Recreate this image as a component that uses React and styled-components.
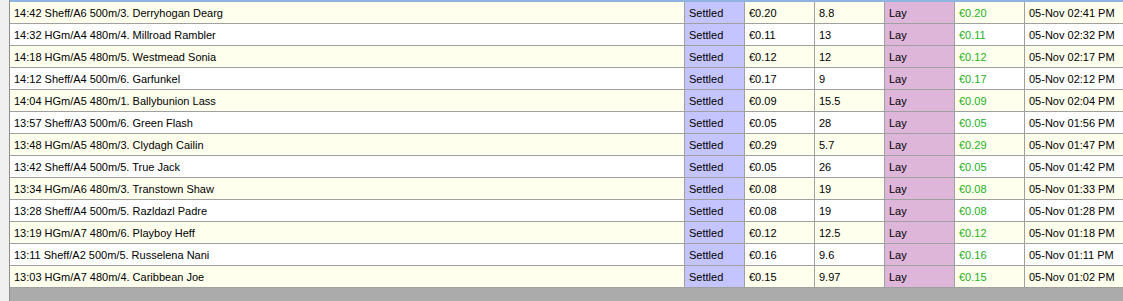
import React from 'react'
import styled, { createGlobalStyle } from 'styled-components'

const rows = [
    ['14:42 Sheff/A6 500m/3. Derryhogan Dearg', '€0.20', '8.8', '€0.20', '05-Nov 02:41 PM'],
    ['14:32 HGm/A4 480m/4. Millroad Rambler', '€0.11', '13', '€0.11', '05-Nov 02:32 PM'],
    ['14:18 HGm/A5 480m/5. Westmead Sonia', '€0.12', '12', '€0.12', '05-Nov 02:17 PM'],
    ['14:12 Sheff/A4 500m/6. Garfunkel', '€0.17', '9', '€0.17', '05-Nov 02:12 PM'],
    ['14:04 HGm/A5 480m/1. Ballybunion Lass', '€0.09', '15.5', '€0.09', '05-Nov 02:04 PM'],
    ['13:57 Sheff/A3 500m/6. Green Flash', '€0.05', '28', '€0.05', '05-Nov 01:56 PM'],
    ['13:48 HGm/A5 480m/3. Clydagh Cailin', '€0.29', '5.7', '€0.29', '05-Nov 01:47 PM'],
    ['13:42 Sheff/A4 500m/5. True Jack', '€0.05', '26', '€0.05', '05-Nov 01:42 PM'],
    ['13:34 HGm/A6 480m/3. Transtown Shaw', '€0.08', '19', '€0.08', '05-Nov 01:33 PM'],
    ['13:28 Sheff/A4 500m/5. Razldazl Padre', '€0.08', '19', '€0.08', '05-Nov 01:28 PM'],
    ['13:19 HGm/A7 480m/6. Playboy Heff', '€0.12', '12.5', '€0.12', '05-Nov 01:18 PM'],
    ['13:11 Sheff/A2 500m/5. Russelena Nani', '€0.16', '9.6', '€0.16', '05-Nov 01:11 PM'],
    ['13:03 HGm/A7 480m/4. Caribbean Joe', '€0.15', '9.97', '€0.15', '05-Nov 01:02 PM'],
]

const App = () => {
    return (
        <>
            <GlobalStyle />
            <Frame>
                <SideStrip />
                <GridArea>
                    <TopLine />
                    {rows.map((r, i) => (
                        <Row key={i} $alt={i % 2 === 1}>
                            <Cell>{r[0]}</Cell>
                            <Cell $bg="#c4c4ff">Settled</Cell>
                            <Cell>{r[1]}</Cell>
                            <Cell>{r[2]}</Cell>
                            <Cell $bg="#ddb6d9">Lay</Cell>
                            <Cell $color="#1cb01c">{r[3]}</Cell>
                            <Cell $last>{r[4]}</Cell>
                        </Row>
                    ))}
                    <Workspace />
                </GridArea>
            </Frame>
        </>
    )
}

export default App

const GlobalStyle = createGlobalStyle`
    html, body {
        margin: 0;
        padding: 0;
        background: #f0f0f0;
    }
    body {
        font-family: "Liberation Sans", Arial, sans-serif;
        font-size: 11px;
    }
`

const Frame = styled.div`
    display: flex;
    width: 1123px;
    height: 301px;
    overflow: hidden;
`

const SideStrip = styled.div`
    width: 9px;
    flex: none;
    background: #f0f0f0;
    border-right: 1px solid #8c8c8c;
`

const GridArea = styled.div`
    flex: 1;
    display: flex;
    flex-direction: column;
    background: #ababab;
`

const TopLine = styled.div`
    height: 2px;
    background: #8fb4e0;
`

const Row = styled.div`
    display: grid;
    grid-template-columns: 675px 60px 70px 70px 70px 70px 1fr;
    height: 22px;
    box-sizing: border-box;
    border-bottom: 1px solid #a0a0a0;
    background: ${p => (p.$alt ? '#ffffff' : '#ffffed')};
`

const Cell = styled.div`
    display: flex;
    align-items: center;
    padding-left: 4px;
    box-sizing: border-box;
    border-right: ${p => (p.$last ? 'none' : '1px solid #a0a0a0')};
    background: ${p => p.$bg || 'transparent'};
    color: ${p => p.$color || '#000'};
    white-space: nowrap;
    overflow: hidden;
`

const Workspace = styled.div`
    flex: 1;
    background: #ababab;
`
